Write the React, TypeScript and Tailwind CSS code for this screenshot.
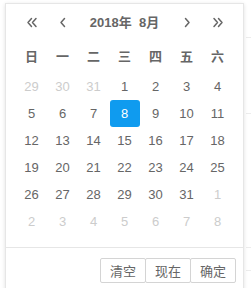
import React from "react";

const weeks: { d: number; cur: boolean }[][] = (() => {
  const cells: { d: number; cur: boolean }[] = [];
  [29, 30, 31].forEach((d) => cells.push({ d, cur: false }));
  for (let i = 1; i <= 31; i++) cells.push({ d: i, cur: true });
  for (let i = 1; i <= 8; i++) cells.push({ d: i, cur: false });
  const rows = [];
  for (let r = 0; r < 6; r++) rows.push(cells.slice(r * 7, r * 7 + 7));
  return rows;
})();

const font = { fontFamily: '"Liberation Sans", "Noto Sans CJK SC", sans-serif' };

function Chev({ dir, double }: { dir: "l" | "r"; double?: boolean }) {
  const single = dir === "l" ? "M6.5 2.5 L3 6.5 L6.5 10.5" : "M3.5 2.5 L7 6.5 L3.5 10.5";
  const dbl =
    dir === "l"
      ? "M6.5 2.5 L3 6.5 L6.5 10.5 M11 2.5 L7.5 6.5 L11 10.5"
      : "M3 2.5 L6.5 6.5 L3 10.5 M7.5 2.5 L11 6.5 L7.5 10.5";
  return (
    <svg width={double ? 14 : 10} height="13" viewBox={double ? "0 0 14 13" : "0 0 10 13"} className="mx-auto">
      <path d={double ? dbl : single} fill="none" stroke="#666" strokeWidth="1.5" strokeLinecap="round" strokeLinejoin="round" />
    </svg>
  );
}

export default function App() {
  return (
    <div className="relative w-[251px] h-[288px] overflow-hidden bg-white" style={font}>
      <div className="absolute left-[246px] top-[37px] w-[10px] h-px bg-[#ececec]" />
      <div className="absolute left-[246px] top-[113px] w-[10px] h-px bg-[#ececec]" />
      <div className="absolute left-[246px] top-[247px] w-[10px] h-px bg-[#ececec]" />
      <div className="absolute left-[246px] top-[270px] w-[10px] h-px bg-[#ececec]" />
      <div className="relative ml-[5px] mt-[3px] w-[239px] h-[300px] bg-white border border-[#e6e6e6] shadow-[0_1px_4px_rgba(0,0,0,0.12)]">
        <div className="grid grid-cols-7 px-[10px] h-[37px] items-center text-[#666]">
          <Chev dir="l" double />
          <Chev dir="l" />
          <span className="col-span-3 text-center text-[13px] font-bold">2018年&nbsp;&nbsp;8月</span>
          <Chev dir="r" />
          <Chev dir="r" double />
        </div>
        <div className="grid grid-cols-7 px-[10px] h-[32px] items-center text-[13px] font-semibold text-[#666]">
          {["日", "一", "二", "三", "四", "五", "六"].map((w) => (
            <span key={w} className="text-center">{w}</span>
          ))}
        </div>
        <div className="px-[10px] pb-[12px] border-b border-[#e6e6e6]">
          {weeks.map((row, ri) => (
            <div key={ri} className="grid grid-cols-7 h-[27px]">
              {row.map((c, ci) => {
                const sel = c.cur && c.d === 8;
                return (
                  <div key={ci} className="flex items-center justify-center">
                    <span
                      className={
                        "flex items-center justify-center w-[30px] h-[27px] rounded-[3px] text-[13px] " +
                        (sel ? "bg-[#0f9bef] text-white" : c.cur ? "text-[#666]" : "text-[#ccc]")
                      }
                    >
                      {c.d}
                    </span>
                  </div>
                );
              })}
            </div>
          ))}
        </div>
        <div className="flex justify-end pt-[10px] pr-[7px]">
          {["清空", "现在", "确定"].map((t, i) => (
            <button
              key={t}
              className={
                "h-[25px] w-[46px] border border-[#d4d4d4] bg-white text-[13px] text-[#666] leading-none rounded-[2px] " +
                (i > 0 ? "-ml-px" : "")
              }
              style={{ fontFamily: '"Noto Sans CJK SC", sans-serif' }}
            >
              {t}
            </button>
          ))}
        </div>
      </div>
    </div>
  );
}
